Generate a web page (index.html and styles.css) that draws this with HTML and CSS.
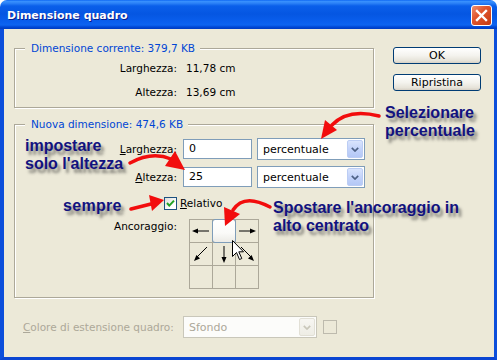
FILE: index.html
```html
<!DOCTYPE html>
<html lang="it">
<head>
<meta charset="utf-8">
<title>Dimensione quadro</title>
<link rel="stylesheet" href="styles.css">
</head>
<body>
<div class="window">
  <div class="titlebar">
    <span class="title">Dimensione quadro</span>
    <span class="close"><svg width="19" height="19" viewBox="0 0 19 19"><path d="M5 5 L14 14 M14 5 L5 14" stroke="#fff" stroke-width="2.4" stroke-linecap="square"/></svg></span>
  </div>
  <div class="content">
    <div class="main">
      <div class="groups">
        <div class="group current">
          <div class="group-title">Dimensione corrente: 379,7 KB</div>
          <div class="info">
            <span class="lbl">Larghezza:</span><span>11,78 cm</span>
            <span class="lbl">Altezza:</span><span>13,69 cm</span>
          </div>
        </div>
        <div class="group new">
          <div class="group-title">Nuova dimensione: 474,6 KB</div>
          <div class="field first">
            <span class="lbl"><u>L</u>arghezza:</span>
            <div class="input">0</div>
            <div class="select"><span>percentuale</span><span class="drop"><svg width="8" height="5" viewBox="0 0 8 5"><path d="M0.8 0.8 L4 4 L7.2 0.8" fill="none" stroke="#4D6185" stroke-width="1.7"/></svg></span></div>
          </div>
          <div class="field">
            <span class="lbl"><u>A</u>ltezza:</span>
            <div class="input">25</div>
            <div class="select"><span>percentuale</span><span class="drop"><svg width="8" height="5" viewBox="0 0 8 5"><path d="M0.8 0.8 L4 4 L7.2 0.8" fill="none" stroke="#4D6185" stroke-width="1.7"/></svg></span></div>
          </div>
          <div class="check-row">
            <span class="check"><svg width="11" height="11" viewBox="0 0 11 11"><path d="M2 5 L4.3 7.6 L9 2.6" fill="none" stroke="#21A121" stroke-width="2"/></svg></span>
            <span><u>R</u>elativo</span>
          </div>
          <div class="anchor-row">
            <span class="lbl">Ancoraggio:</span>
            <div class="anchor">
              <div class="cell"><svg width="22" height="22" viewBox="0 0 22 22"><line x1="6" y1="11" x2="19" y2="11" stroke="#000"/><polygon points="2,11 8,8.5 8,13.5"/></svg></div>
              <div class="cell"><div class="anchor-sel"></div></div>
              <div class="cell"><svg width="22" height="22" viewBox="0 0 22 22"><line x1="3" y1="11" x2="16" y2="11" stroke="#000"/><polygon points="20,11 14,8.5 14,13.5"/></svg></div>
              <div class="cell"><svg width="22" height="22" viewBox="0 0 22 22"><line x1="17" y1="4" x2="7" y2="14" stroke="#000"/><polygon points="4,18 10,15.6 6.4,12"/></svg></div>
              <div class="cell"><svg width="22" height="22" viewBox="0 0 22 22"><line x1="11" y1="3" x2="11" y2="16" stroke="#000"/><polygon points="11,20 8.5,14 13.5,14"/></svg></div>
              <div class="cell"><svg width="22" height="22" viewBox="0 0 22 22"><line x1="5" y1="4" x2="15" y2="14" stroke="#000"/><polygon points="18,18 15.6,12 12,15.6"/></svg></div>
              <div class="cell"></div>
              <div class="cell"></div>
              <div class="cell"></div>
            </div>
          </div>
        </div>
      </div>
      <div class="buttons">
        <div class="btn">OK</div>
        <div class="btn">Ripristina</div>
      </div>
    </div>
    <div class="bottom">
      <span class="dis-lbl"><u>C</u>olore di estensione quadro:</span>
      <div class="select disabled"><span>Sfondo</span><span class="drop"><svg width="8" height="5" viewBox="0 0 8 5"><path d="M0.8 0.8 L4 4 L7.2 0.8" fill="none" stroke="#C9C7BA" stroke-width="1.7"/></svg></span></div>
      <span class="dis-check"></span>
    </div>
  </div>

  <div class="notes">
    <svg class="arrows" width="497" height="360" viewBox="0 0 497 360">
      <g fill="none" stroke="#F20D0D" stroke-width="3.5" stroke-linecap="round">
        <path d="M379 116 Q348 108 332 125"/>
        <path d="M130 163 Q152 151 171 159"/>
        <path d="M131 209 L151 204"/>
        <path d="M270 207 Q244 193 233 210"/>
      </g>
      <g fill="#F20D0D">
        <polygon points="321,139 337,130 325,120"/>
        <polygon points="185,170 175,151 165,166"/>
        <polygon points="164,200 149,195 152,211"/>
        <polygon points="225,226 240,214 224,207"/>
      </g>
      <path d="M232.5 240.5 L232.5 256.5 L236.5 252.5 L239.5 259.5 L241.8 258.5 L238.8 251.8 L243.5 251.8 Z" fill="#fff" stroke="#000" stroke-width="1"/>
    </svg>
    <div class="note n1">impostare<br>solo l'altezza</div>
    <div class="note n2">Selezionare<br>percentuale</div>
    <div class="note n3">sempre</div>
    <div class="note n4">Spostare l'ancoraggio in<br>alto centrato</div>
  </div>
</div>
</body>
</html>
```

FILE: styles.css
```css
html, body {
  margin: 0;
  padding: 0;
  background: #ffffff;
}
body {
  font-family: "DejaVu Sans", Verdana, sans-serif;
  font-size: 10.5px;
  color: #000;
}
.window {
  position: relative;
  width: 497px;
  height: 360px;
  display: flex;
  flex-direction: column;
  overflow: hidden;
}
.titlebar {
  flex: none;
  height: 29px;
  box-sizing: border-box;
  border-radius: 7px 7px 0 0;
  background: linear-gradient(to bottom, #0058EE 0px, #3A93FF 1px, #2E84F8 3px, #0A5FEA 6px, #0556E2 14px, #0A5FEE 22px, #0D64F0 25px, #0048D6 27px, #003BC0 29px);
  display: flex;
  justify-content: space-between;
  align-items: flex-start;
  padding: 5px 5px 0 7px;
}
.title {
  margin-top: 4px;
  color: #fff;
  font-weight: bold;
  font-size: 11px;
  line-height: 14px;
  text-shadow: 1px 1px 0 #0A1C8A;
}
.close {
  width: 21px;
  height: 21px;
  box-sizing: border-box;
  border: 1px solid #fff;
  border-radius: 3px;
  background: linear-gradient(135deg, #EE9070 0%, #E0562E 40%, #C63A12 100%);
  display: flex;
  align-items: center;
  justify-content: center;
}
.close svg { display: block; }
.content {
  flex: 1;
  background: #ECE9D8;
  border-left: 4px solid #0B4EDB;
  border-right: 3px solid #0B4EDB;
  border-bottom: 3px solid #0A45D2;
  padding-left: 10px;
  display: flex;
  flex-direction: column;
}
.main {
  display: flex;
  align-items: flex-start;
}
.groups {
  width: 360px;
  display: flex;
  flex-direction: column;
}
.group {
  border: 1px solid #ACA899;
  box-shadow: inset 1px 1px 0 #fff, 1px 1px 0 #fff;
  box-sizing: border-box;
  width: 360px;
}
.group-title {
  margin: -7px 0 0 10px;
  padding: 0 5px 0 6px;
  width: max-content;
  line-height: 13px;
  background: #ECE9D8;
  color: #0046D5;
}
.current {
  margin-top: 19px;
  padding-bottom: 7px;
}
.info {
  margin-top: 5px;
  display: grid;
  grid-template-columns: 161px auto;
  column-gap: 10px;
  row-gap: 8px;
  grid-auto-rows: 16px;
  line-height: 16px;
}
.info .lbl { text-align: right; }
.new {
  margin-top: 16px;
  padding-bottom: 8px;
}
.field {
  display: flex;
  align-items: center;
  height: 22px;
  margin-top: 6px;
}
.field.first { margin-top: 7px; }
.lbl {
  width: 162px;
  text-align: right;
  flex: none;
}
.input {
  margin-left: 6px;
  width: 69px;
  height: 20px;
  box-sizing: border-box;
  border: 1px solid #7F9DB9;
  background: #fff;
  padding-left: 5px;
  line-height: 18px;
  font-size: 11px;
}
.select {
  margin-left: 5px;
  width: 108px;
  height: 22px;
  box-sizing: border-box;
  border: 1px solid #7F9DB9;
  background: #fff;
  display: flex;
  align-items: center;
  justify-content: space-between;
  padding-left: 5px;
  font-size: 11px;
}
.drop {
  width: 16px;
  height: 18px;
  margin-right: 1px;
  box-sizing: border-box;
  border: 1px solid #BCCDF4;
  border-radius: 2px;
  background: linear-gradient(to bottom, #D9E4FD 0%, #C3D3FA 50%, #B4C8F6 100%);
  display: flex;
  align-items: center;
  justify-content: center;
}
.drop svg { display: block; }
.check-row {
  margin-top: 9px;
  height: 13px;
  padding-left: 149px;
  display: flex;
  align-items: center;
  line-height: 13px;
}
.check {
  width: 13px;
  height: 13px;
  box-sizing: border-box;
  border: 1px solid #1C5180;
  background: linear-gradient(135deg, #DCDCD7 0%, #fff 70%);
  margin-right: 3px;
  display: flex;
  align-items: center;
  justify-content: center;
}
.check svg { display: block; }
.anchor-row {
  margin-top: 9px;
  display: flex;
  align-items: flex-start;
}
.anchor-row .lbl {
  margin-top: 1px;
  line-height: 13px;
}
.anchor {
  margin-left: 12px;
  display: grid;
  grid-template-columns: repeat(3, 22px);
  grid-template-rows: repeat(3, 22px);
  gap: 1px;
  padding: 1px;
  background: #ACA899;
}
.cell {
  background: #ECE9D8;
}
.cell svg { display: block; }
.anchor-sel {
  margin: -1px;
  width: 24px;
  height: 24px;
  box-sizing: border-box;
  border: 1px solid #7F9DB9;
  border-radius: 3px;
  background: linear-gradient(to bottom, #ffffff 0%, #FAFAF8 60%, #ECEBE6 100%);
}
.buttons {
  margin-left: 19px;
  padding-top: 18px;
  display: flex;
  flex-direction: column;
  gap: 10px;
}
.btn {
  width: 88px;
  height: 17px;
  box-sizing: border-box;
  border: 1px solid #003C74;
  border-radius: 3px;
  background: linear-gradient(to bottom, #FFFFFF 0%, #F4F3EE 50%, #E6E3D9 85%, #D6D0C5 100%);
  text-align: center;
  line-height: 15px;
  font-size: 11px;
}
.bottom {
  margin-top: 18px;
  height: 22px;
  padding-left: 9px;
  display: flex;
  align-items: center;
}
.dis-lbl {
  width: 160px;
  flex: none;
  color: #ACA899;
}
.select.disabled {
  margin-left: 0;
  width: 134px;
  border-color: #C9C7BA;
  background: #FCFCFA;
  color: #ACA899;
}
.select.disabled .drop {
  border-color: #E2E0D6;
  background: linear-gradient(to bottom, #F7F6F2 0%, #EEEDE5 100%);
}
.dis-check {
  margin-left: 6px;
  width: 14px;
  height: 14px;
  box-sizing: border-box;
  border: 1px solid #BDBAAD;
}
.notes {
  position: absolute;
  left: 0;
  top: 0;
  width: 497px;
  height: 360px;
  pointer-events: none;
}
.arrows {
  position: absolute;
  left: 0;
  top: 0;
}
.note {
  position: absolute;
  font-family: "Liberation Sans", Arial, sans-serif;
  font-weight: bold;
  font-size: 16px;
  line-height: 18px;
  color: #12127F;
  text-shadow: 3px 4px 3px rgba(40, 40, 40, 0.55);
  white-space: nowrap;
}
.n1 { left: 25px; top: 137px; }
.n2 { left: 385px; top: 104px; }
.n3 { left: 63px; top: 197px; letter-spacing: 0.3px; }
.n4 { left: 273px; top: 199px; }
```
